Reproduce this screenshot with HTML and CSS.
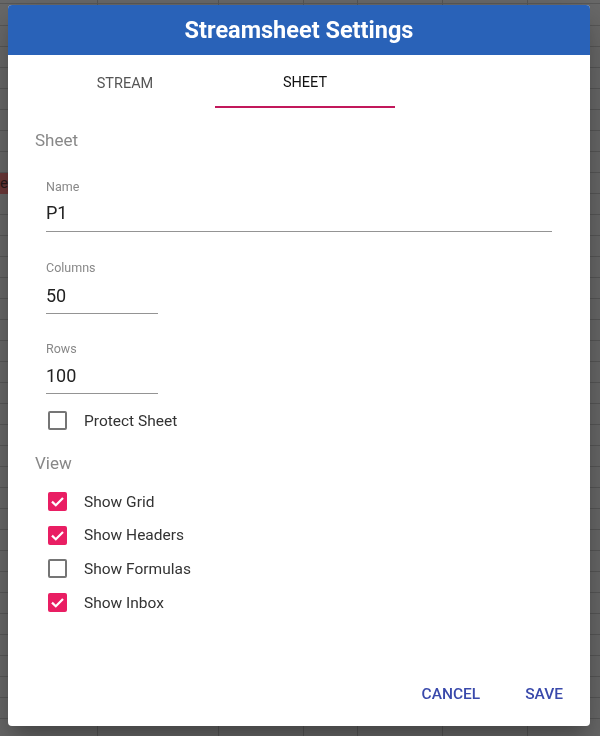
FILE: index.html
```html
<!DOCTYPE html>
<html>
<head>
<meta charset="utf-8">
<link rel="stylesheet" href="styles.css">
</head>
<body>
<div class="backdrop">
  <div class="cell-red">ee</div>
</div>
<div class="dialog">
  <div class="dialog-title">Streamsheet Settings</div>
  <div class="tabs">
    <div class="tab">STREAM</div>
    <div class="tab active">SHEET</div>
  </div>
  <div class="content">
    <div class="legend">Sheet</div>
    <div class="field field-wide">
      <div class="field-label">Name</div>
      <div class="field-value">P1</div>
    </div>
    <div class="field field-short">
      <div class="field-label">Columns</div>
      <div class="field-value">50</div>
    </div>
    <div class="field field-short field-rows">
      <div class="field-label">Rows</div>
      <div class="field-value">100</div>
    </div>
    <div class="check-row first-check">
      <span class="box"></span>
      <span class="check-label">Protect Sheet</span>
    </div>
    <div class="legend legend-view">View</div>
    <div class="check-list">
      <div class="check-row">
        <span class="box checked"><svg viewBox="0 0 19 19" width="19" height="19"><path d="M4 9.6 L7.8 13.3 L15 6" fill="none" stroke="#fff" stroke-width="2.2"/></svg></span>
        <span class="check-label">Show Grid</span>
      </div>
      <div class="check-row">
        <span class="box checked"><svg viewBox="0 0 19 19" width="19" height="19"><path d="M4 9.6 L7.8 13.3 L15 6" fill="none" stroke="#fff" stroke-width="2.2"/></svg></span>
        <span class="check-label">Show Headers</span>
      </div>
      <div class="check-row">
        <span class="box"></span>
        <span class="check-label">Show Formulas</span>
      </div>
      <div class="check-row">
        <span class="box checked"><svg viewBox="0 0 19 19" width="19" height="19"><path d="M4 9.6 L7.8 13.3 L15 6" fill="none" stroke="#fff" stroke-width="2.2"/></svg></span>
        <span class="check-label">Show Inbox</span>
      </div>
    </div>
  </div>
  <div class="actions">
    <button class="btn">CANCEL</button>
    <button class="btn">SAVE</button>
  </div>
</div>
</body>
</html>
```
FILE: styles.css
```css
* { box-sizing: border-box; }
html, body {
  margin: 0;
  padding: 0;
  width: 600px;
  height: 736px;
  overflow: hidden;
}
body {
  font-family: Roboto, "Liberation Sans", Arial, sans-serif;
  background-color: #6a6a6a;
  background-image:
    linear-gradient(90deg, transparent 97px, #575757 97px, #575757 98px, transparent 98px,
      transparent 218px, #575757 218px, #575757 219px, transparent 219px,
      transparent 303px, #575757 303px, #575757 304px, transparent 304px,
      transparent 357px, #575757 357px, #575757 358px, transparent 358px,
      transparent 442px, #575757 442px, #575757 443px, transparent 443px,
      transparent 527px, #575757 527px, #575757 528px, transparent 528px),
    repeating-linear-gradient(180deg, transparent 0, transparent 20px, #595959 20px, #595959 21px);
  background-position: 0 0, 0 5px;
  padding: 5px 10px 0 8px;
}
.backdrop {
  position: fixed;
  inset: 0;
  z-index: 0;
}
.cell-red {
  position: absolute;
  left: -14px;
  top: 173px;
  width: 40px;
  height: 21px;
  background: #6f3a3a;
  color: #2a1a1a;
  font-size: 15px;
  line-height: 21px;
  text-align: right;
  padding-right: 18px;
}
.dialog {
  position: relative;
  z-index: 1;
  width: 582px;
  height: 721px;
  background: #fff;
  border-radius: 4px;
  box-shadow: 0 11px 15px -7px rgba(0,0,0,0.2), 0 24px 38px 3px rgba(0,0,0,0.14), 0 9px 46px 8px rgba(0,0,0,0.12);
  display: flex;
  flex-direction: column;
  overflow: hidden;
}
.dialog-title {
  height: 50px;
  background: #2962b8;
  color: #fff;
  font-size: 23.5px;
  font-weight: 700;
  line-height: 50px;
  text-align: center;
}
.tabs {
  display: flex;
  height: 53px;
  padding-left: 27px;
}
.tab {
  width: 180px;
  text-align: center;
  font-size: 14.5px;
  font-weight: 400;
  color: #555;
  line-height: 53px;
  padding-top: 2px;
  border-bottom: 2px solid transparent;
}
.tab.active {
  color: #111;
  border-bottom-color: #c2185b;
  line-height: 51px;
}
.content {
  flex: 1;
  padding-left: 27px;
  padding-right: 38px;
}
.legend {
  margin-top: 20px;
  font-size: 17px;
  line-height: 24px;
  color: #888;
}
.field {
  margin-left: 11px;
  margin-top: 27px;
}
.field-wide { width: 506px; }
.field-short { width: 112px; margin-top: 28px; }
.field-rows { margin-top: 27px; }
.field-label {
  font-size: 12.5px;
  line-height: 16px;
  color: #888;
}
.field-value {
  margin-top: 6px;
  font-size: 18px;
  line-height: 24px;
  color: #222;
  padding-bottom: 6px;
  border-bottom: 1px solid #949494;
}
.field-short .field-value { margin-top: 8px; padding-bottom: 5px; }
.field-rows .field-value { margin-top: 7px; }
.check-row {
  display: flex;
  align-items: center;
  height: 33.7px;
  margin-left: 13px;
}
.first-check { margin-top: 10px; }
.legend-view { margin-top: 13px; }
.check-list { margin-top: 10px; }
.box {
  width: 19px;
  height: 19px;
  border: 2px solid #757575;
  border-radius: 2px;
  flex: none;
  position: relative;
}
.box.checked {
  border: none;
  background: #e91e63;
}
.box svg { display: block; }
.check-label {
  margin-left: 17px;
  font-size: 15.5px;
  color: #333;
}
.actions {
  display: flex;
  justify-content: flex-end;
  align-items: center;
  gap: 29px;
  padding: 0 19px 0 0;
  height: 64px;
}
.btn {
  border: none;
  background: none;
  font-family: Roboto, "Liberation Sans", Arial, sans-serif;
  font-size: 15.5px;
  font-weight: 500;
  color: #3949ab;
  padding: 8px 8px;
  cursor: pointer;
}
```
